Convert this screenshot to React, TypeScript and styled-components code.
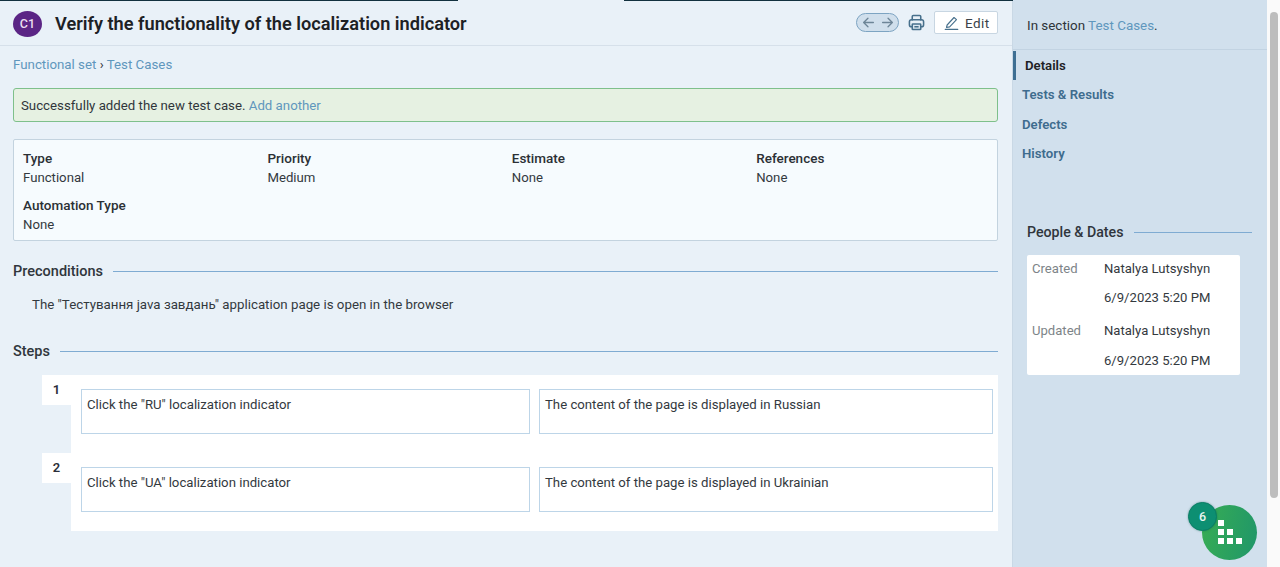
import React from "react";
import styled, { createGlobalStyle } from "styled-components";

const Global = createGlobalStyle`
  html, body { margin: 0; padding: 0; height: 567px; overflow: hidden; background: #fff; }
  * { box-sizing: border-box; }
  body { font-family: Roboto, "Liberation Sans", sans-serif; font-size: 14px; color: #2b3035; }
`;

const Page = styled.div`
  display: flex;
  width: 1280px;
  height: 567px;
  background: #fff;
`;
const Content = styled.div`
  position: relative;
  display: flex;
  width: 1267px;
  height: 567px;
`;
const TopLine = styled.div<{ $left: number; $width: number }>`
  position: absolute;
  top: 0;
  left: ${(p) => p.$left}px;
  width: ${(p) => p.$width}px;
  height: 1px;
  background: #12313f;
`;
const Main = styled.main`
  width: 1013px;
  height: 100%;
  background: #e9f1f8;
  border-right: 1px solid #c9d8e5;
`;
const Header = styled.header`
  display: flex;
  align-items: center;
  height: 46px;
  padding: 0 14px 0 13px;
  border-bottom: 1px solid #d6e0ea;
`;
const Badge = styled.div`
  width: 29px;
  height: 26px;
  margin-top: 2px;
  border-radius: 50%;
  background: #5b2585;
  color: #e9dff0;
  display: flex;
  align-items: center;
  justify-content: center;
  font-size: 12.5px;
  font-weight: 500;
`;
const Title = styled.h1`
  margin: 2px 0 0 13px;
  flex: 1;
  font-size: 18.2px;
  font-weight: 600;
  color: #1d2125;
`;
const Pager = styled.div`
  display: flex;
  align-items: center;
  justify-content: center;
  gap: 6px;
  width: 43px;
  height: 19px;
  border: 1px solid #7da4c2;
  border-radius: 10px;
  background: #d0dfec;
  color: #6d8597;
`;
const PrintBox = styled.div`
  display: flex;
  margin: 0 9px 0 9px;
  color: #47708c;
`;
const EditButton = styled.div`
  display: flex;
  align-items: center;
  gap: 6px;
  width: 64px;
  height: 23px;
  padding-left: 9px;
  background: #fff;
  border: 1px solid #c8d6e2;
  border-radius: 2px;
  color: #3a4249;
  font-size: 13.5px;
  letter-spacing: 0.4px;
`;
const Body = styled.div`
  padding: 0 14px 0 13px;
`;
const Crumbs = styled.div`
  height: 42px;
  padding-top: 11px;
  font-size: 13.3px;
  color: #2b3035;
`;
const Link = styled.span`
  color: #5f97bd;
`;
const Success = styled.div`
  display: flex;
  align-items: center;
  height: 34px;
  padding-left: 7px;
  background: #e6f1e2;
  border: 1px solid #7ec08b;
  border-radius: 3px;
  font-size: 13.25px;
  color: #30363b;
`;
const Fields = styled.section`
  display: grid;
  grid-template-columns: repeat(4, 244.4px);
  grid-auto-rows: 47px;
  height: 102px;
  margin-top: 17px;
  padding: 9px 9px 0;
  background: #f6fbfe;
  border: 1px solid #c3d3df;
  border-radius: 2px;
`;
const Field = styled.div`
  font-size: 13.2px;
  line-height: 19px;
  color: #33393e;
`;
const FieldName = styled.div`
  font-size: 13.5px;
  font-weight: 500;
  color: #2b3035;
`;
const SectionHead = styled.div<{ $top: number }>`
  display: flex;
  align-items: center;
  gap: 10px;
  margin-top: ${(p) => p.$top}px;
  height: 20px;
  font-size: 14.5px;
  font-weight: 500;
  color: #30363c;
  &::after {
    content: "";
    flex: 1;
    height: 1px;
    background: #7fabd2;
  }
`;
const SideHead = styled(SectionHead)`
  font-size: 14.2px;
`;
const Precondition = styled.p`
  margin: 14px 0 0 19px;
  height: 19px;
  font-size: 13.3px;
  line-height: 19px;
  color: #33393e;
`;
const Steps = styled.div`
  margin: 14px 0 0 29px;
  display: flex;
  flex-direction: column;
`;
const StepRow = styled.div`
  display: flex;
  height: 78px;
`;
const StepNo = styled.div`
  width: 29px;
  height: 30px;
  flex: none;
  background: #fff;
  font-size: 13px;
  font-weight: 600;
  line-height: 30px;
  text-align: center;
  color: #2b2f3a;
`;
const StepBody = styled.div`
  flex: 1;
  display: flex;
  gap: 9px;
  padding: 14px 5px 0 10px;
  background: #fff;
`;
const StepCell = styled.div<{ $width: number }>`
  width: ${(p) => p.$width}px;
  height: 45px;
  padding: 6px 5px;
  border: 1px solid #bdd5e8;
  font-size: 13.2px;
  line-height: 17px;
  color: #33393e;
`;
const Side = styled.aside`
  position: relative;
  width: 254px;
  height: 100%;
  background: #d1e0ed;
`;
const SectionNote = styled.div`
  height: 50px;
  padding: 18px 14px 0;
  border-bottom: 1px solid #c2d3e2;
  font-size: 13.4px;
  color: #2e3439;
`;
const Nav = styled.nav`
  display: flex;
  flex-direction: column;
  padding-top: 0.5px;
`;
const NavItem = styled.div<{ $active?: boolean }>`
  display: flex;
  align-items: center;
  height: 29.5px;
  padding-left: 9px;
  font-size: 13.2px;
  font-weight: 600;
  color: ${(p) => (p.$active ? "#1d2125" : "#3e6c8e")};
  border-left: 3px solid ${(p) => (p.$active ? "#3e6f93" : "transparent")};
  margin-left: ${(p) => (p.$active ? 0 : -3)}px;
`;
const PeopleBlock = styled.div`
  margin: 53.5px 15px 0 14px;
`;
const PeopleCard = styled.div`
  display: grid;
  grid-template-columns: 72px 1fr;
  grid-template-rows: 26px 32px 34px 26px;
  align-items: center;
  width: 213px;
  height: 120px;
  margin-top: 13px;
  padding: 0 5px;
  background: #fff;
  border-radius: 2px;
  font-size: 13.1px;
  color: #33393e;
`;
const PeopleLabel = styled.span`
  color: #7d8488;
`;
const Fab = styled.div`
  position: absolute;
  left: 189px;
  top: 505px;
  width: 55px;
  height: 55px;
  border-radius: 50%;
  background: linear-gradient(100deg, #38ad54, #1f9669);
`;
const FabCount = styled.div`
  position: absolute;
  left: 175px;
  top: 502px;
  width: 29px;
  height: 29px;
  display: flex;
  align-items: center;
  justify-content: center;
  border-radius: 50%;
  background: #0d8f72;
  border: 1px solid #0a7f66;
  box-shadow: 0 0 2px rgba(10, 90, 80, 0.5);
  color: #eaf6f1;
  font-size: 12.5px;
  font-weight: 500;
`;
const Scrollbar = styled.div`
  position: relative;
  flex: 1;
  background: #fafafa;
  &::after {
    content: "";
    position: absolute;
    top: 12px;
    left: 3px;
    width: 8px;
    height: 486px;
    border-radius: 4px;
    background: #bdbdbd;
  }
`;

const Arrow = ({ flip }: { flip?: boolean }) => (
  <svg width="13" height="13" viewBox="0 0 24 24" fill="none" stroke="currentColor" strokeWidth="2.4" strokeLinecap="round" strokeLinejoin="round" style={flip ? { transform: "scaleX(-1)" } : undefined}>
    <path d="M21 12H3M11 4l-8 8 8 8" />
  </svg>
);
const Printer = () => (
  <svg width="17" height="17" viewBox="0 0 24 24" fill="none" stroke="currentColor" strokeWidth="2.2" strokeLinejoin="round">
    <path d="M6 9V3.5A1.5 1.5 0 0 1 7.5 2h9A1.5 1.5 0 0 1 18 3.5V9" />
    <rect x="2" y="8" width="20" height="10" rx="3" />
    <rect x="6" y="14" width="12" height="8" rx="1" fill="#dbe7f1" />
    <path d="M9 18h6" />
  </svg>
);
const Pencil = () => (
  <svg width="15" height="15" viewBox="0 0 24 24" fill="none" stroke="#47708c" strokeWidth="1.8" strokeLinejoin="round" strokeLinecap="round">
    <path d="M5 16 16 4l4 3.5L9 19l-5 1z" />
    <path d="M2 23h20" />
  </svg>
);
const Blocks = () => (
  <svg width="26" height="24" viewBox="0 0 26 24" fill="#fff" style={{ position: "absolute", left: 15, top: 15 }}>
    <rect x="1" y="0" width="6" height="6" />
    <rect x="1" y="9" width="6" height="6" />
    <rect x="10" y="9" width="6" height="6" />
    <rect x="1" y="18" width="6" height="6" />
    <rect x="10" y="18" width="6" height="6" />
    <rect x="19" y="18" width="6" height="6" />
  </svg>
);

export default function App() {
  return (
    <Page>
      <Global />
      <Content>
        <TopLine $left={0} $width={458} />
        <TopLine $left={624} $width={643} />
        <Main>
          <Header>
            <Badge>C1</Badge>
            <Title>Verify the functionality of the localization indicator</Title>
            <Pager>
              <Arrow />
              <Arrow flip />
            </Pager>
            <PrintBox>
              <Printer />
            </PrintBox>
            <EditButton>
              <Pencil />
              Edit
            </EditButton>
          </Header>
          <Body>
            <Crumbs>
              <Link>Functional set</Link> › <Link>Test Cases</Link>
            </Crumbs>
            <Success>
              Successfully added the new test case.&nbsp;<Link>Add another</Link>
            </Success>
            <Fields>
              <Field>
                <FieldName>Type</FieldName>Functional
              </Field>
              <Field>
                <FieldName>Priority</FieldName>Medium
              </Field>
              <Field>
                <FieldName>Estimate</FieldName>None
              </Field>
              <Field>
                <FieldName>References</FieldName>None
              </Field>
              <Field>
                <FieldName>Automation Type</FieldName>None
              </Field>
            </Fields>
            <SectionHead $top={20}>Preconditions</SectionHead>
            <Precondition>The "Тестування java завдань" application page is open in the browser</Precondition>
            <SectionHead $top={27}>Steps</SectionHead>
            <Steps>
              <StepRow>
                <StepNo>1</StepNo>
                <StepBody>
                  <StepCell $width={449}>Click the "RU" localization indicator</StepCell>
                  <StepCell $width={454}>The content of the page is displayed in Russian</StepCell>
                </StepBody>
              </StepRow>
              <StepRow>
                <StepNo>2</StepNo>
                <StepBody>
                  <StepCell $width={449}>Click the "UA" localization indicator</StepCell>
                  <StepCell $width={454}>The content of the page is displayed in Ukrainian</StepCell>
                </StepBody>
              </StepRow>
            </Steps>
          </Body>
        </Main>
        <Side>
          <SectionNote>
            In section <Link>Test Cases</Link>.
          </SectionNote>
          <Nav>
            <NavItem $active>Details</NavItem>
            <NavItem>Tests &amp; Results</NavItem>
            <NavItem>Defects</NavItem>
            <NavItem>History</NavItem>
          </Nav>
          <PeopleBlock>
            <SideHead $top={0}>People &amp; Dates</SideHead>
            <PeopleCard>
              <PeopleLabel>Created</PeopleLabel>
              <span>Natalya Lutsyshyn</span>
              <span />
              <span>6/9/2023 5:20 PM</span>
              <PeopleLabel>Updated</PeopleLabel>
              <span>Natalya Lutsyshyn</span>
              <span />
              <span>6/9/2023 5:20 PM</span>
            </PeopleCard>
          </PeopleBlock>
          <Fab>
            <Blocks />
          </Fab>
          <FabCount>6</FabCount>
        </Side>
      </Content>
      <Scrollbar />
    </Page>
  );
}
